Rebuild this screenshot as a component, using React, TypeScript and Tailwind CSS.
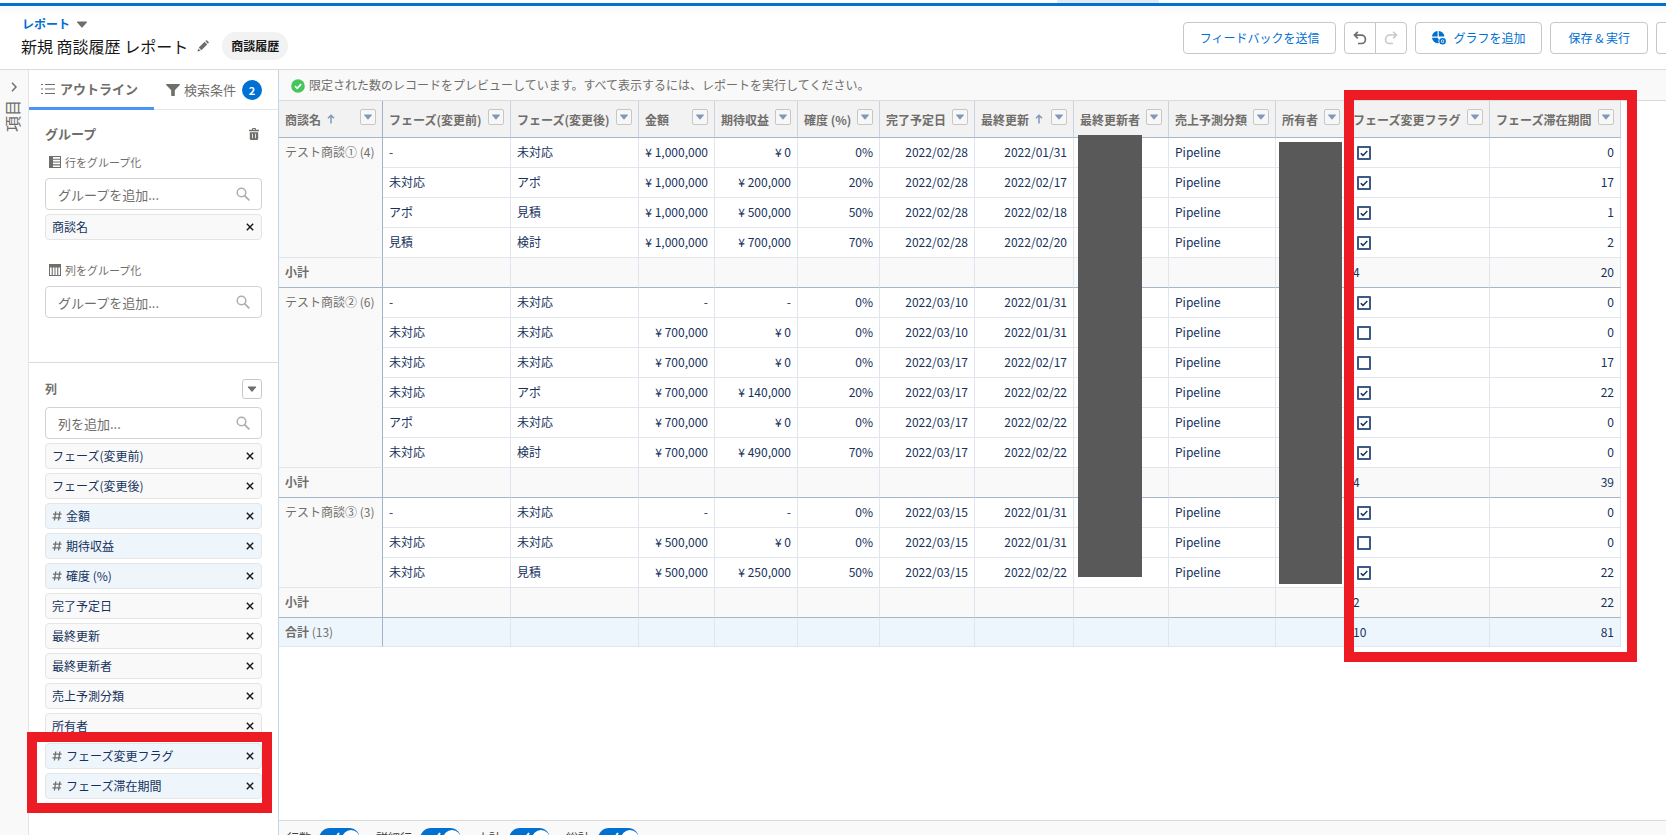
import { useState } from 'react';
import type { ReactNode } from 'react';

type Column = {
  name: string;
  width: number;
  sorted?: boolean;
  align: 'left' | 'right';
};

const columns: Column[] = [
  { name: 'フェーズ(変更前)', width: 128, align: 'left' },
  { name: 'フェーズ(変更後)', width: 128, align: 'left' },
  { name: '金額', width: 76, align: 'right' },
  { name: '期待収益', width: 83, align: 'right' },
  { name: '確度 (%)', width: 82, align: 'right' },
  { name: '完了予定日', width: 95, align: 'right' },
  { name: '最終更新', width: 99, sorted: true, align: 'right' },
  { name: '最終更新者', width: 95, align: 'left' },
  { name: '売上予測分類', width: 107, align: 'left' },
  { name: '所有者', width: 71, align: 'left' },
  { name: 'フェーズ変更フラグ', width: 143, align: 'left' },
  { name: 'フェーズ滞在期間', width: 131, align: 'right' },
];

type Row = {
  before: string;
  after: string;
  amount: string;
  expected: string;
  probability: string;
  closeDate: string;
  updated: string;
  changed: boolean;
  days: number;
};

const row = (
  before: string,
  after: string,
  amount: string,
  expected: string,
  probability: string,
  closeDate: string,
  updated: string,
  changed: boolean,
  days: number,
): Row => ({ before, after, amount, expected, probability, closeDate, updated, changed, days });

const groups = [
  {
    name: 'テスト商談①',
    flags: 4,
    days: 20,
    rows: [
      row('-', '未対応', '¥ 1,000,000', '¥ 0', '0%', '2022/02/28', '2022/01/31', true, 0),
      row('未対応', 'アポ', '¥ 1,000,000', '¥ 200,000', '20%', '2022/02/28', '2022/02/17', true, 17),
      row('アポ', '見積', '¥ 1,000,000', '¥ 500,000', '50%', '2022/02/28', '2022/02/18', true, 1),
      row('見積', '検討', '¥ 1,000,000', '¥ 700,000', '70%', '2022/02/28', '2022/02/20', true, 2),
    ],
  },
  {
    name: 'テスト商談②',
    flags: 4,
    days: 39,
    rows: [
      row('-', '未対応', '-', '-', '0%', '2022/03/10', '2022/01/31', true, 0),
      row('未対応', '未対応', '¥ 700,000', '¥ 0', '0%', '2022/03/10', '2022/01/31', false, 0),
      row('未対応', '未対応', '¥ 700,000', '¥ 0', '0%', '2022/03/17', '2022/02/17', false, 17),
      row('未対応', 'アポ', '¥ 700,000', '¥ 140,000', '20%', '2022/03/17', '2022/02/22', true, 22),
      row('アポ', '未対応', '¥ 700,000', '¥ 0', '0%', '2022/03/17', '2022/02/22', true, 0),
      row('未対応', '検討', '¥ 700,000', '¥ 490,000', '70%', '2022/03/17', '2022/02/22', true, 0),
    ],
  },
  {
    name: 'テスト商談③',
    flags: 2,
    days: 22,
    rows: [
      row('-', '未対応', '-', '-', '0%', '2022/03/15', '2022/01/31', true, 0),
      row('未対応', '未対応', '¥ 500,000', '¥ 0', '0%', '2022/03/15', '2022/01/31', false, 0),
      row('未対応', '見積', '¥ 500,000', '¥ 250,000', '50%', '2022/03/15', '2022/02/22', true, 22),
    ],
  },
];

const columnFields = [
  { name: 'フェーズ(変更前)', numeric: false },
  { name: 'フェーズ(変更後)', numeric: false },
  { name: '金額', numeric: true },
  { name: '期待収益', numeric: true },
  { name: '確度 (%)', numeric: true },
  { name: '完了予定日', numeric: false },
  { name: '最終更新', numeric: false },
  { name: '最終更新者', numeric: false },
  { name: '売上予測分類', numeric: false },
  { name: '所有者', numeric: false },
  { name: 'フェーズ変更フラグ', numeric: true },
  { name: 'フェーズ滞在期間', numeric: true },
];

const Triangle = ({ className }: { className: string }) => (
  <svg viewBox="0 0 10 7" className={className} fill="currentColor" aria-hidden="true">
    <path d="M0.6 0.5h8.8c.5 0 .7.5.4.9L5.6 6.3a.8.8 0 0 1-1.2 0L.2 1.4C-.1 1 .1.5.6.5z" />
  </svg>
);

const SortArrow = () => (
  <svg viewBox="0 0 8 10" className="h-2.5 w-2 text-[#7f9ab8]" fill="none" stroke="currentColor" strokeWidth="1.5" aria-label="昇順">
    <path d="M4 9.5V1.2M1 4.2 4 1.2l3 3" />
  </svg>
);

const SearchIcon = () => (
  <svg viewBox="0 0 14 14" className="size-3.5 shrink-0 text-[#b0adab]" fill="none" stroke="currentColor" aria-hidden="true">
    <circle cx="5.5" cy="5.5" r="4.3" strokeWidth="1.5" />
    <path d="m8.8 8.8 4 4" strokeWidth="1.8" strokeLinecap="round" />
  </svg>
);

const SearchField = ({ id, label, placeholder }: { id: string; label: string; placeholder: string }) => (
  <div className="flex h-8 items-center rounded border border-[#d4d2d0] bg-white pr-[11px] pl-3">
    <label htmlFor={id} className="sr-only">{label}</label>
    <input
      id={id}
      type="text"
      placeholder={placeholder}
      className="h-full min-w-0 flex-1 bg-transparent text-[13px] leading-7 outline-none placeholder:text-[#706e6b]"
    />
    <SearchIcon />
  </div>
);

const FieldPill = ({ name, numeric }: { name: string; numeric?: boolean }) => (
  <div
    className={`flex h-[26px] items-center rounded border border-[#e5e5e5] pr-[7px] pl-1.5 text-xs leading-5 text-[#16325c] ${
      numeric ? 'bg-[#eef6fc]' : 'bg-[#f9f9f9]'
    }`}
  >
    {numeric && (
      <svg viewBox="0 0 10 10" className="mr-1 size-2.5 text-[#706e6b]" fill="none" stroke="currentColor" strokeWidth="1.3" aria-hidden="true">
        <path d="M3.8.5 2.4 9.5M7.9.5 6.5 9.5M1 3.2h8.6M.4 6.8H9" />
      </svg>
    )}
    <span className="flex-1 truncate">{name}</span>
    <button type="button" aria-label={`${name} を削除`} className="text-[#181818]">
      <svg viewBox="0 0 8 8" className="size-2" fill="none" stroke="currentColor" strokeWidth="1.4">
        <path d="m.8.8 6.4 6.4M7.2.8.8 7.2" />
      </svg>
    </button>
  </div>
);

const HeaderCell = ({ name, sorted, first }: { name: string; sorted?: boolean; first?: boolean }) => (
  <th
    scope="col"
    className={`h-[37px] border-r border-b border-b-[#a8b7c7] bg-[#f2f2f2] px-1.5 py-0 text-left ${
      first ? 'border-r-[#a3b3c7]' : 'border-r-[#c6d3e1]'
    }`}
  >
    <div className="flex h-5 items-center text-xs leading-5 font-bold whitespace-nowrap text-[#706e6b]">
      <span className="mr-1.5 pt-0.5">{name}</span>
      {sorted && <SortArrow />}
      <button
        type="button"
        aria-label={`${name} の操作`}
        className="mb-1 ml-auto flex size-4 shrink-0 items-center justify-center rounded-[2px] border border-[#c9c7c5] bg-[#f7f7f7] text-[#7f9ab8]"
      >
        <Triangle className="h-1.5 w-2" />
      </button>
    </div>
  </th>
);

const Cell = ({ align, children }: { align?: 'left' | 'right'; children?: ReactNode }) => (
  <td
    className={`h-[30px] border-r border-b border-[#e0e5ee] bg-white px-1.5 pt-0 pb-0.5 whitespace-nowrap ${
      align === 'right' ? 'text-right' : 'text-left'
    }`}
  >
    {children}
  </td>
);

const FlagBox = ({ checked, label }: { checked: boolean; label: string }) => (
  <span className="relative mt-0.5 ml-1 flex size-3.5">
    <input
      type="checkbox"
      checked={checked}
      readOnly
      aria-label={label}
      className="size-3.5 appearance-none rounded-[1px] border-2 border-[#3d5a86] bg-white"
    />
    {checked && (
      <svg viewBox="0 0 14 14" className="pointer-events-none absolute inset-0 size-3.5" fill="none" stroke="#16325c" strokeWidth="1.5">
        <path d="m3.8 7.2 2.2 2.2 4.3-4.4" />
      </svg>
    )}
  </span>
);

const ReportTable = () => (
  <table className="w-[1342px] table-fixed border-separate border-spacing-0 text-xs leading-5 text-[#16325c]">
    <colgroup>
      <col className="w-[104px]" />
      {columns.map((c) => (
        <col key={c.name} style={{ width: c.width }} />
      ))}
    </colgroup>
    <thead>
      <tr>
        <HeaderCell name="商談名" sorted first />
        {columns.map((c) => (
          <HeaderCell key={c.name} name={c.name} sorted={c.sorted} />
        ))}
      </tr>
    </thead>
    {groups.map((group) => (
      <tbody key={group.name}>
        {group.rows.map((r, i) => (
          <tr key={i}>
            {i === 0 && (
              <th
                scope="rowgroup"
                rowSpan={group.rows.length}
                className="border-r border-b border-r-[#a3b3c7] border-b-[#e0e5ee] bg-[#f9f9f9] px-1.5 py-1 text-left align-top font-normal whitespace-nowrap text-[#706e6b]"
              >
                {group.name} ({group.rows.length})
              </th>
            )}
            <Cell>{r.before}</Cell>
            <Cell>{r.after}</Cell>
            <Cell align="right">{r.amount}</Cell>
            <Cell align="right">{r.expected}</Cell>
            <Cell align="right">{r.probability}</Cell>
            <Cell align="right">{r.closeDate}</Cell>
            <Cell align="right">{r.updated}</Cell>
            <Cell />
            <Cell>Pipeline</Cell>
            <Cell />
            <Cell>
              <FlagBox checked={r.changed} label="フェーズ変更フラグ" />
            </Cell>
            <Cell align="right">{r.days}</Cell>
          </tr>
        ))}
        <tr>
          <th
            scope="row"
            className="h-[30px] border-r border-b border-r-[#a3b3c7] border-b-[#a8b7c7] bg-[#f9f9f9] px-1.5 pt-0 pb-0.5 text-left font-bold text-[#706e6b]"
          >
            小計
          </th>
          {columns.map((c, i) => (
            <td
              key={c.name}
              className={`border-r border-b border-r-[#e0e5ee] border-b-[#a8b7c7] bg-[#f9f9f9] px-1.5 pt-0 pb-0.5 ${
                c.align === 'right' ? 'text-right' : 'text-left'
              }`}
            >
              {i === 10 && group.flags}
              {i === 11 && group.days}
            </td>
          ))}
        </tr>
      </tbody>
    ))}
    <tfoot>
      <tr>
        <th
          scope="row"
          className="h-[29px] border-r border-b border-r-[#a3b3c7] border-b-[#e0e5ee] bg-[#eef6fd] px-1.5 py-0 text-left font-bold text-[#706e6b]"
        >
          合計 <span className="font-normal">(13)</span>
        </th>
        {columns.map((c, i) => (
          <td
            key={c.name}
            className={`border-r border-b border-[#e0e5ee] bg-[#eef6fd] px-1.5 py-0 ${
              c.align === 'right' ? 'text-right' : 'text-left'
            }`}
          >
            {i === 10 && 10}
            {i === 11 && 81}
          </td>
        ))}
      </tr>
    </tfoot>
  </table>
);

const Toggle = ({ label }: { label: string }) => {
  const [on, setOn] = useState(true);
  return (
    <label className="flex shrink-0 gap-2 text-xs leading-5 text-[#3e3e3c]">
      <span>{label}</span>
      <span className="relative h-[22px] w-[41px]">
        <input
          type="checkbox"
          role="switch"
          checked={on}
          onChange={() => setOn(!on)}
          className="block h-[22px] w-[41px] appearance-none rounded-full bg-[#b0adab] checked:bg-[#0070d2]"
        />
        <svg viewBox="0 0 41 22" className="pointer-events-none absolute inset-0 h-[22px] w-[41px]" fill="none">
          <circle cx={on ? 32 : 9} cy="11" r="9" fill="#fff" />
          {on && <path d="m12 9 3 3 5-7" stroke="#fff" strokeWidth="2" />}
        </svg>
      </span>
    </label>
  );
};

const TopBar = () => (
  <header className="flex h-16 shrink-0 items-start justify-between overflow-hidden border-b border-[#dddbda] bg-linear-to-b from-[#f8f8f9] to-white to-15%">
    <div className="pt-2 pl-[21px]">
      <a href="#reports" className="flex h-5 items-center gap-[7px] pl-px text-xs leading-5 font-bold text-[#0070d2]">
        レポート
        <Triangle className="h-[7px] w-2.5 text-[#706e6b]" />
      </a>
      <div className="flex h-6 items-center">
        <h1 className="text-base leading-6 text-[#181818]">新規 商談履歴 レポート</h1>
        <button type="button" aria-label="レポート名を編集" className="ml-[9px] text-[#706e6b]">
          <svg viewBox="0 0 12 12" className="size-3" fill="currentColor">
            <path d="M.5 11.5 1.2 8.4 3.6 10.8zM1.8 7.6 7.6 1.8 10.2 4.4 4.4 10.2zM8.3 1.1 9 .4a.8.8 0 0 1 1.1 0l1.5 1.5a.8.8 0 0 1 0 1.1l-.7.7z" />
          </svg>
        </button>
        <span className="ml-[13px] rounded-full bg-[#f2f2f2] px-[9px] py-1 text-xs leading-5 font-bold text-[#181818]">商談履歴</span>
      </div>
    </div>
    <div className="flex shrink-0 gap-2 pt-4 text-xs leading-5 text-[#0070d2]">
      <button type="button" className="h-8 rounded border border-[#c9c7c5] bg-white px-4">フィードバックを送信</button>
      <div className="flex">
        <button type="button" aria-label="元に戻す" className="flex h-8 w-8 items-center justify-center rounded-l border border-[#c9c7c5] text-[#706e6b]">
          <svg viewBox="0 0 14 14" className="size-3.5" fill="none" stroke="currentColor" strokeWidth="1.7">
            <path d="M4.8.8 1.5 4.1l3.3 3.3M1.5 4.1h7a3.9 3.9 0 0 1 3.9 3.9v.8a3.7 3.7 0 0 1-3.7 3.7H5" />
          </svg>
        </button>
        <button type="button" aria-label="やり直し" className="-ml-px flex h-8 w-8 items-center justify-center rounded-r border border-[#c9c7c5] text-[#c9c7c5]">
          <svg viewBox="0 0 14 14" className="size-3.5" fill="none" stroke="currentColor" strokeWidth="1.5">
            <path d="m9.2.8 3.3 3.3-3.3 3.3M12.5 4.1h-7A3.9 3.9 0 0 0 1.6 8v.8a3.7 3.7 0 0 0 3.7 3.7H9" />
          </svg>
        </button>
      </div>
      <button type="button" className="flex h-8 items-center gap-[7px] rounded border border-[#c9c7c5] bg-white px-4">
        <svg viewBox="0 0 14 14" className="size-3.5" aria-hidden="true">
          <path d="M5.6 0v5.6H0A5.8 5.8 0 0 1 5.6 0zM6.8 0a5.8 5.8 0 0 1 5.6 5.6H6.800zM0 6.800h5.600l1.200 1.800a4.200 4.200 0 0 0 0 3.600A6 6 0 0 1 0 6.800z" fill="currentColor" />
          <circle cx="10.600" cy="10.200" r="2.500" fill="none" stroke="currentColor" strokeWidth="1.600" />
          <path d="M10.600 9v2.400M9.400 10.200h2.400" stroke="currentColor" strokeWidth=".8" />
        </svg>
        グラフを追加
      </button>
      <button type="button" className="h-8 rounded border border-[#c9c7c5] bg-white px-[17px]">保存 &amp; 実行</button>
      <button type="button" aria-label="保存" className="h-8 w-2.5 rounded-l border border-r-0 border-[#c9c7c5] bg-white" />
    </div>
  </header>
);

const Sidebar = () => (
  <aside className="flex w-[250px] shrink-0 flex-col border-r border-[#c6d3e1] bg-white">
    <div className="flex h-10 shrink-0 border-b border-[#e5e5e5] text-[13px] leading-5 text-[#706e6b]" role="tablist">
      <button type="button" role="tab" aria-selected="true" className="-mb-px flex w-[125px] items-center gap-[5px] border-b-[3px] border-[#4a95f5] pl-3 font-bold whitespace-nowrap">
        <svg viewBox="0 0 14 12" className="h-3 w-3.5" fill="none" stroke="currentColor" strokeWidth="1.2" aria-hidden="true">
          <path d="M0 1.500h2M4 1.500h10M0 6h2M4 6h10M0 10.500h2M4 10.500h10" />
        </svg>
        アウトライン
      </button>
      <button type="button" role="tab" aria-selected="false" className="flex flex-1 items-center gap-1 pl-3 whitespace-nowrap">
        <svg viewBox="0 0 14 12" className="h-3 w-3.5 shrink-0" fill="currentColor" aria-hidden="true">
          <path d="M.6 0h12.800c.5 0 .7.600.4 1L8.800 6.200v5.300c0 .4-.3.500-.6.500H5.800c-.4 0-.6-.2-.6-.5V6.200L.2 1C-.1.600.1 0 .6 0z" />
        </svg>
        検索条件
        <span className="ml-0.5 flex size-5 shrink-0 items-center justify-center rounded-full bg-[#0070d2] text-[11px] leading-4 font-bold text-white">2</span>
      </button>
    </div>

    <section className="h-[253px] shrink-0 border-b border-[#dddbda] pt-3.5 pr-4 pl-4">
      <div className="flex h-5 items-center justify-between">
        <h2 className="text-[13px] leading-5 font-bold text-[#706e6b]">グループ</h2>
        <button type="button" aria-label="グループをすべて削除" className="mr-[3px] text-[#706e6b]">
          <svg viewBox="0 0 10 12" className="h-3 w-2.5" fill="currentColor">
            <path d="M3 1.800V1c0-.5.400-.9.900-.9h2.200c.5 0 .9.400.9.900v.8h2.500c.3 0 .5.200.5.500v1H0v-1c0-.3.200-.5.500-.5zM4 1v.8h2V1zM.8 4.300h8.400v6.500c0 .7-.5 1.100-1.100 1.100H1.900c-.6 0-1.100-.4-1.100-1.100zM3.100 5.800v4.500h.8V5.800zM6.100 5.800v4.500h.8V5.800z" fillRule="evenodd" />
          </svg>
        </button>
      </div>
      <div className="mt-2 flex h-5 items-center gap-1 pl-1 text-[11px] leading-5 text-[#706e6b]">
        <svg viewBox="0 0 12 12" className="size-3" aria-hidden="true">
          <path d="M0 0h12v12H0z" fill="#706e6b" />
          <path d="M4 1h7v1.700H4zM4 3.800h7v1.700H4zM4 6.600h7v1.700H4zM4 9.400h7V11H4z" fill="#fff" />
        </svg>
        行をグループ化
      </div>
      <div className="mt-1.5">
        <SearchField id="row-group" label="行をグループ化" placeholder="グループを追加..." />
      </div>
      <div className="mt-1">
        <FieldPill name="商談名" />
      </div>
      <div className="mt-5 flex h-5 items-center gap-1 pl-1 text-[11px] leading-5 text-[#706e6b]">
        <svg viewBox="0 0 12 12" className="size-3" aria-hidden="true">
          <path d="M0 0h12v12H0z" fill="#706e6b" />
          <path d="M1 3.500h1.700v7.500H1zM3.800 3.500h1.700v7.500H3.800zM6.500 3.500h1.700v7.500H6.500zM9.300 3.500H11v7.500H9.300z" fill="#fff" />
        </svg>
        列をグループ化
      </div>
      <div className="mt-1.5">
        <SearchField id="col-group" label="列をグループ化" placeholder="グループを追加..." />
      </div>
    </section>

    <section className="flex-1 px-4 pt-4">
      <div className="flex h-5 items-center justify-between">
        <h2 className="text-xs leading-5 font-bold text-[#706e6b]">列</h2>
        <button type="button" aria-label="列の操作" className="flex size-5 items-center justify-center rounded-[3px] border border-[#c9c7c5] text-[#706e6b]">
          <Triangle className="h-1.5 w-2.5" />
        </button>
      </div>
      <div className="mt-2">
        <SearchField id="add-column" label="列を追加" placeholder="列を追加..." />
      </div>
      <div className="relative mt-1">
        <ul className="flex flex-col gap-1">
          {columnFields.map((f) => (
            <li key={f.name}>
              <FieldPill name={f.name} numeric={f.numeric} />
            </li>
          ))}
        </ul>
        {/* highlight around the two formula columns */}
        <div className="pointer-events-none absolute -right-2.5 -bottom-3.5 -left-[18px] z-10 h-[81px] border-10 border-[#ed1c24]" />
      </div>
    </section>
  </aside>
);

const App = () => (
  <div className="flex h-screen flex-col overflow-hidden bg-white font-['Noto_Sans_CJK_JP',sans-serif]">
    <div className="flex h-1.5 shrink-0 border-b-3 border-[#0070d2] bg-white pl-[1057px]">
      <span className="w-[102px] bg-[#e1eaf5]" />
    </div>
    <TopBar />
    <div className="flex min-h-0 flex-1">
      <nav className="flex w-[29px] shrink-0 flex-col items-center border-r border-[#e5e5e5] bg-[#f9f9f9] pt-3 text-[#706e6b]">
        <button type="button" aria-label="項目パネルを開く">
          <svg viewBox="0 0 6 10" className="h-2.5 w-1.5" fill="none" stroke="currentColor" strokeWidth="1.5">
            <path d="m1 .8 4 4.2-4 4.2" />
          </svg>
        </button>
        <span className="mt-2 mr-1 rotate-180 text-base leading-5 [text-orientation:sideways] [writing-mode:vertical-rl]">項目</span>
      </nav>
      <Sidebar />
      <main className="flex min-w-0 flex-1 flex-col">
        <p className="flex h-[31px] shrink-0 items-center gap-1 border-b border-[#dddbda] bg-[#f9f9f9] pl-3 text-xs leading-5 text-[#706e6b]">
          <svg viewBox="0 0 14 14" className="mt-0.5 size-3.5" aria-hidden="true">
            <circle cx="7" cy="7" r="6.8" fill="#45c65a" />
            <path d="m4 7.2 2.2 2.2 4-4.2" fill="none" stroke="#fff" strokeWidth="1.7" />
          </svg>
          限定された数のレコードをプレビューしています。すべて表示するには、レポートを実行してください。
        </p>
        <div className="min-h-0 flex-1">
          <div className="relative w-max">
            <ReportTable />
            {/* masked names */}
            <div className="absolute top-[34px] left-[799px] h-[442px] w-16 bg-[#595959]" />
            <div className="absolute top-[41px] left-[1000px] h-[442px] w-[63px] bg-[#595959]" />
            <div className="pointer-events-none absolute -top-[11px] left-[1065px] h-[572px] w-[293px] border-10 border-[#ed1c24]" />
          </div>
        </div>
        <footer className="flex h-[15px] shrink-0 gap-4 overflow-hidden border-t border-[#dddbda] bg-[#f9f9f9] pt-[7px] pl-2">
          <Toggle label="行数" />
          <Toggle label="詳細行" />
          <Toggle label="小計" />
          <Toggle label="総計" />
        </footer>
      </main>
    </div>
  </div>
);

export default App;
